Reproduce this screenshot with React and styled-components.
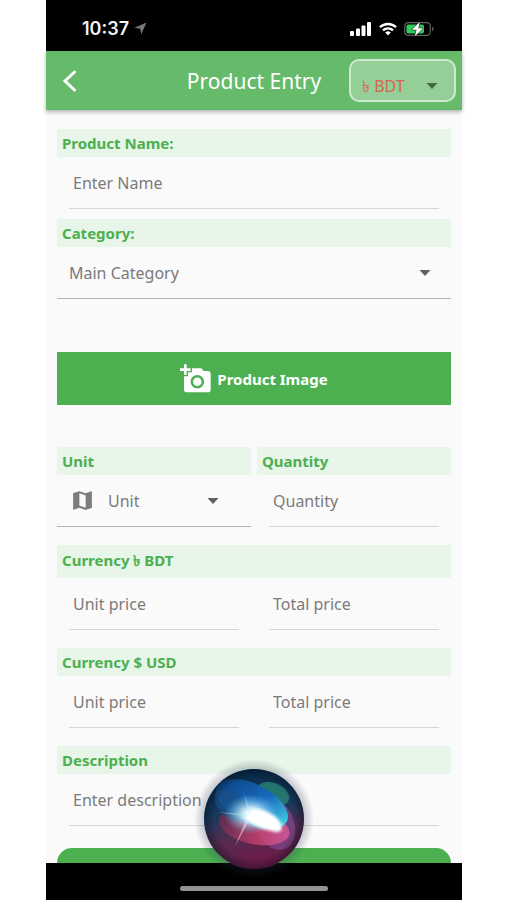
import { useState } from 'react'
import styled, { createGlobalStyle } from 'styled-components'
import { MdAddAPhoto, MdMap } from 'react-icons/md'

const colors = {
  green: '#4caf50',
  header: '#66bb6a',
  labelBg: '#e8f5e9',
  labelText: '#4caf50',
  text: '#7b7b7b',
  page: '#fafafa',
  red: '#d9634f',
}

const GlobalStyle = createGlobalStyle`
  * {
    box-sizing: border-box;
  }
  body {
    margin: 0;
    background: #fff;
    font-family: 'Noto Sans', 'Open Sans', sans-serif;
  }
  button, input, select {
    font: inherit;
    margin: 0;
    border: 0;
    background: none;
    border-radius: 0;
  }
`

const Page = styled.div`
  padding: 0 45px 0 46px;
`

const Phone = styled.div`
  position: relative;
  display: flex;
  flex-direction: column;
  height: 100vh;
  background: ${colors.page};
`

const StatusBar = styled.div`
  display: flex;
  flex: none;
  align-items: center;
  justify-content: space-between;
  height: 51px;
  padding: 6px 28px 0 36px;
  background: #000;
`

const StatusGroup = styled.div`
  display: flex;
  align-items: center;
  gap: ${(props) => props.$gap}px;
`

const Time = styled.span`
  font-family: Inter, sans-serif;
  font-size: 18px;
  font-weight: 600;
  color: #f2f2f2;
`

const Header = styled.header`
  position: relative;
  display: grid;
  flex: none;
  grid-template-columns: 1fr auto 1fr;
  align-items: center;
  height: 59px;
  padding: 0 6px;
  background: ${colors.header};
  box-shadow: 0 2px 4px rgba(0, 0, 0, 0.3);
`

const BackButton = styled.button`
  display: flex;
  width: 36px;
  padding: 4px 10px;
`

const Title = styled.h1`
  margin: 0;
  font-size: 21px;
  font-weight: 400;
  color: #fff;
`

const SelectBox = styled.div`
  display: grid;
  align-items: center;
  height: ${(props) => (props.$flat ? '100%' : '52px')};
  border-bottom: ${(props) => (props.$flat ? '0' : '1px solid #b4b4b4')};
`

const CurrencyBox = styled.div`
  justify-self: end;
  width: 107px;
  height: 43px;
  padding-top: 10px;
  border: 2px solid rgba(255, 255, 255, 0.55);
  border-radius: 10px;
  background: rgba(255, 255, 255, 0.3);
`

const Select = styled.select`
  grid-area: 1 / 1;
  width: 100%;
  height: 100%;
  padding: 0 0 0 ${(props) => props.$indent}px;
  appearance: none;
  font-size: 16px;
  color: ${(props) => props.$color || colors.text};
  outline: none;
`

const Caret = styled.svg`
  grid-area: 1 / 1;
  justify-self: end;
  width: 12px;
  height: 6px;
  margin-right: ${(props) => props.$right}px;
  pointer-events: none;
`

const LeadingIcon = styled.span`
  display: flex;
  grid-area: 1 / 1;
  padding-left: 13px;
  color: #7d7d7d;
  pointer-events: none;
`

const Form = styled.form`
  flex: 1;
  min-height: 0;
  padding: 19px 11px 0;
  overflow: hidden;
`

const Section = styled.div`
  margin-bottom: ${(props) => props.$space}px;
`

const Columns = styled.div`
  display: grid;
  grid-template-columns: 1fr 1fr;
  gap: 6px;
`

const Label = styled.label`
  display: flex;
  align-items: center;
  height: ${(props) => (props.$tall ? 33 : 28)}px;
  padding-left: 5px;
  background: ${colors.labelBg};
  font-size: 15px;
  font-weight: 700;
  color: ${colors.labelText};
`

const InputBox = styled.div`
  height: 52px;
  margin: 0 12px;
  border-bottom: 1px solid #d6d6d6;
`

const Input = styled.input`
  width: 100%;
  height: 100%;
  padding: 0 4px;
  font-size: 16px;
  color: ${colors.text};
  outline: none;

  &::placeholder {
    color: ${colors.text};
    opacity: 1;
  }
`

const ImageButton = styled.button`
  display: flex;
  align-items: center;
  justify-content: center;
  gap: 5px;
  width: 100%;
  height: 53px;
  background: ${colors.green};
  font-size: 15px;
  font-weight: 700;
  color: #fff;
`

const SubmitButton = styled.button`
  width: 100%;
  height: 50px;
  border-radius: 15px;
  background: ${colors.green};
`

const HomeBar = styled.div`
  display: flex;
  flex: none;
  justify-content: center;
  height: 37px;
  padding-top: 23px;
  background: #000;
`

const HomeIndicator = styled.div`
  width: 148px;
  height: 5px;
  border-radius: 3px;
  background: #939393;
`

const Orb = styled.svg`
  position: absolute;
  bottom: 16px;
  left: 50%;
  width: 130px;
  height: 130px;
  transform: translateX(-50%);
  pointer-events: none;
`

const Arrow = ({ right, color = '#606060' }) => (
  <Caret viewBox="0 0 12 6" $right={right}>
    <path d="M0.5 0h11L6 6z" fill={color} />
  </Caret>
)

const TextField = ({ id, placeholder, label }) => (
  <InputBox>
    <Input id={id} placeholder={placeholder} aria-label={label} />
  </InputBox>
)

const LocationIcon = () => (
  <svg width="13" height="13" viewBox="0 0 13 13">
    <path d="M12.5 0.5L7.2 12.5L6.3 6.7L0.5 5.8z" fill="#777" />
  </svg>
)

const SignalIcon = () => (
  <svg width="22" height="14" viewBox="0 0 22 14" fill="#fff">
    <rect x="0" y="9" width="4" height="5" rx="1" />
    <rect x="6" y="6.5" width="4" height="7.5" rx="1" />
    <rect x="11.5" y="3.5" width="4" height="10.5" rx="1" />
    <rect x="17" y="0" width="4" height="14" rx="1" />
  </svg>
)

const WifiIcon = () => (
  <svg width="18" height="14" viewBox="0 0 18 14">
    <g fill="none" stroke="#fff" strokeWidth="2.4">
      <path d="M1 5.2A11.5 11.5 0 0 1 17 5.2" />
      <path d="M4 8.4A7.2 7.2 0 0 1 14 8.4" />
    </g>
    <path d="M9 13.4L6.2 10.5A4 4 0 0 1 11.8 10.5z" fill="#fff" />
  </svg>
)

const BatteryIcon = () => (
  <svg width="30" height="16" viewBox="0 0 30 16">
    <rect
      x="0.7"
      y="1.7"
      width="25.6"
      height="12.6"
      rx="3.6"
      fill="none"
      stroke="#5f6661"
      strokeWidth="1.2"
    />
    <rect x="2.4" y="3.4" width="17.6" height="9.2" rx="2" fill="#34c759" />
    <path d="M28 5.8q1.6 0.6 1.6 2.2t-1.6 2.2z" fill="#5f6661" />
    <path
      d="M15.8 0.8L8 8.8h4.600l-2 6.600L19 7.200h-4.600z"
      fill="#fff"
      stroke="#000"
      strokeWidth="1"
      paintOrder="stroke"
    />
  </svg>
)

const AssistantOrb = () => (
  <Orb viewBox="0 0 130 130">
    <defs>
      <linearGradient id="base" x1="0.4" y1="0" x2="0.6" y2="1">
        <stop offset="0" stopColor="#062a48" />
        <stop offset="0.4" stopColor="#16395c" />
        <stop offset="0.65" stopColor="#552c50" />
        <stop offset="1" stopColor="#741747" />
      </linearGradient>
      <radialGradient id="edge">
        <stop offset="0.8" stopColor="#04101f" stopOpacity="0" />
        <stop offset="1" stopColor="#04101f" stopOpacity="0.45" />
      </radialGradient>
      <linearGradient id="blue" x1="0" y1="0.3" x2="1" y2="0.6">
        <stop offset="0" stopColor="#0e4a8c" />
        <stop offset="0.55" stopColor="#1469c4" />
        <stop offset="1" stopColor="#3be0ee" />
      </linearGradient>
      <linearGradient id="pink" x1="0" y1="0" x2="1" y2="0">
        <stop offset="0" stopColor="#6b2b50" />
        <stop offset="0.6" stopColor="#cc4370" />
        <stop offset="1" stopColor="#d85c9b" />
      </linearGradient>
      <radialGradient id="glow">
        <stop offset="0" stopColor="#fff" />
        <stop offset="0.35" stopColor="#dffbff" stopOpacity="0.8" />
        <stop offset="1" stopColor="#5ac8f5" stopOpacity="0" />
      </radialGradient>
      <radialGradient id="shade">
        <stop offset="0.8" stopColor="#25304a" stopOpacity="0.3" />
        <stop offset="1" stopColor="#25304a" stopOpacity="0" />
      </radialGradient>
      <filter id="soft" x="-50%" y="-50%" width="200%" height="200%">
        <feGaussianBlur stdDeviation="1.8" />
      </filter>
      <clipPath id="ball">
        <circle cx="65" cy="65" r="50" />
      </clipPath>
    </defs>
    <circle cx="65" cy="65" r="60" fill="url(#shade)" />
    <circle cx="65" cy="65" r="50" fill="url(#base)" />
    <g clipPath="url(#ball)">
      <ellipse
        cx="84"
        cy="40"
        rx="17"
        ry="11"
        transform="rotate(22 84 40)"
        fill="#2b8577"
        opacity="0.8"
      />
      <ellipse
        cx="86"
        cy="70"
        rx="19"
        ry="27"
        transform="rotate(-22 86 70)"
        fill="#8a4f9c"
        opacity="0.6"
      />
      <ellipse
        cx="65"
        cy="73"
        rx="36"
        ry="17"
        transform="rotate(12 65 73)"
        fill="url(#pink)"
        opacity="0.8"
      />
      <ellipse
        cx="63"
        cy="50"
        rx="39"
        ry="20"
        transform="rotate(27 63 50)"
        fill="url(#blue)"
        opacity="0.9"
      />
      <ellipse
        cx="42"
        cy="51"
        rx="20"
        ry="12"
        transform="rotate(44 42 51)"
        fill="#1b4f86"
        opacity="0.7"
      />
      <circle cx="65" cy="65" r="50" fill="url(#edge)" />
      <ellipse cx="62" cy="60" rx="27" ry="20" fill="url(#glow)" />
      <path
        d="M54 62C60 51 78 55 88 64C94 70 95 79 87 78C76 76 64 73 54 62z"
        fill="#fff"
        filter="url(#soft)"
      />
      <path d="M28 58L58 60L58 63z" fill="#9ee8f0" opacity="0.45" />
      <path d="M46 92L57 66L60 67z" fill="#ffd9e6" opacity="0.55" />
      <path d="M55 38L59 60L62 60z" fill="#c4f4ff" opacity="0.35" />
    </g>
  </Orb>
)

const App = () => {
  const [currency, setCurrency] = useState('BDT')

  return (
    <>
      <GlobalStyle />
      <Page>
        <Phone>
          <StatusBar>
            <StatusGroup $gap={5}>
              <Time>10:37</Time>
              <LocationIcon />
            </StatusGroup>
            <StatusGroup $gap={7}>
              <SignalIcon />
              <WifiIcon />
              <BatteryIcon />
            </StatusGroup>
          </StatusBar>

          <Header>
            <BackButton type="button" aria-label="Back">
              <svg width="16" height="22" viewBox="0 0 16 22">
                <path
                  d="M12.5 2L3 11l9.5 9"
                  fill="none"
                  stroke="#fff"
                  strokeWidth="3"
                  strokeLinecap="round"
                />
              </svg>
            </BackButton>
            <Title>Product Entry</Title>
            <CurrencyBox>
              <SelectBox $flat>
                <Select
                  aria-label="Currency"
                  value={currency}
                  onChange={(e) => setCurrency(e.target.value)}
                  $indent={11}
                  $color={colors.red}
                >
                  <option value="BDT">৳ BDT</option>
                  <option value="USD">$ USD</option>
                </Select>
                <Arrow right={16} color="#42683f" />
              </SelectBox>
            </CurrencyBox>
          </Header>

          <Form>
            <Section $space={10}>
              <Label htmlFor="name">Product Name:</Label>
              <TextField id="name" placeholder="Enter Name" />
            </Section>

            <Section $space={53}>
              <Label htmlFor="category">Category:</Label>
              <SelectBox>
                <Select id="category" $indent={12}>
                  <option>Main Category</option>
                </Select>
                <Arrow right={20} />
              </SelectBox>
            </Section>

            <Section $space={42}>
              <ImageButton type="button">
                <MdAddAPhoto size={32} />
                Product Image
              </ImageButton>
            </Section>

            <Section $space={18}>
              <Columns>
                <div>
                  <Label htmlFor="unit">Unit</Label>
                  <SelectBox>
                    <LeadingIcon>
                      <MdMap size={25} />
                    </LeadingIcon>
                    <Select id="unit" $indent={51}>
                      <option>Unit</option>
                    </Select>
                    <Arrow right={32} />
                  </SelectBox>
                </div>
                <div>
                  <Label htmlFor="quantity">Quantity</Label>
                  <TextField id="quantity" placeholder="Quantity" />
                </div>
              </Columns>
            </Section>

            <Section $space={18}>
              <Label as="div" $tall>
                Currency ৳ BDT
              </Label>
              <Columns>
                <TextField placeholder="Unit price" label="Unit price in BDT" />
                <TextField
                  placeholder="Total price"
                  label="Total price in BDT"
                />
              </Columns>
            </Section>

            <Section $space={18}>
              <Label as="div">Currency $ USD</Label>
              <Columns>
                <TextField placeholder="Unit price" label="Unit price in USD" />
                <TextField
                  placeholder="Total price"
                  label="Total price in USD"
                />
              </Columns>
            </Section>

            <Section $space={22}>
              <Label htmlFor="description">Description</Label>
              <TextField id="description" placeholder="Enter description" />
            </Section>

            <SubmitButton type="submit" aria-label="Submit" />
          </Form>

          <HomeBar>
            <HomeIndicator />
          </HomeBar>
          <AssistantOrb />
        </Phone>
      </Page>
    </>
  )
}

export default App
